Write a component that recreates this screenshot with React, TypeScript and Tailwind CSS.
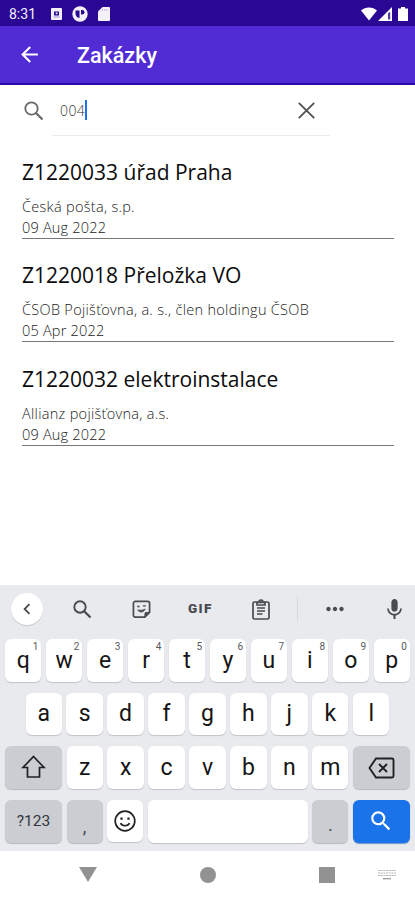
import type { ReactNode } from 'react';
import { MdArrowBack, MdChevronLeft, MdMic, MdMoreHoriz, MdSearch } from 'react-icons/md';

const ORDERS = [
  { name: 'Z1220033 úřad Praha', client: 'Česká pošta, s.p.', date: '09 Aug 2022' },
  { name: 'Z1220018 Přeložka VO', client: 'ČSOB Pojišťovna, a. s., člen holdingu ČSOB', date: '05 Apr 2022' },
  { name: 'Z1220032 elektroinstalace', client: 'Allianz pojišťovna, a.s.', date: '09 Aug 2022' },
];

const TOP_ROW = ['q', 'w', 'e', 'r', 't', 'y', 'u', 'i', 'o', 'p'];
const MIDDLE_ROW = ['a', 's', 'd', 'f', 'g', 'h', 'j', 'k', 'l'];
const BOTTOM_ROW = ['z', 'x', 'c', 'v', 'b', 'n', 'm'];

const StatusBar = () => {
  return (
    <div className="flex h-[26px] shrink-0 items-center bg-[#2a0894] pl-[9px] pr-[7px] pt-px text-[#f3f0fa]">
      <span className="w-[42px] pt-px text-[14px] leading-none">8:31</span>
      <svg width="11" height="12" viewBox="0 0 11 12">
        <rect width="11" height="12" rx="1" fill="currentColor" />
        <path d="M3 3.500h5v4H3z" fill="#2a0894" />
        <path d="M4.700 4.500h1.800v1.700H4.700z" fill="currentColor" />
        <path d="M2.500 9h6" stroke="#8a78c4" strokeWidth=".8" />
      </svg>
      <svg width="16" height="16" viewBox="0 0 16 16" className="ml-[10px]">
        <circle cx="8" cy="8" r="7.700" fill="currentColor" />
        <path d="M3.500 4.500h4V12C4.800 11.500 3.500 9.800 3.500 7.500z" fill="#2a0894" />
        <path d="M9 4h1.200a2.300 2.300 0 0 1 0 4.600H9z" fill="#2a0894" />
      </svg>
      <svg width="12" height="14" viewBox="0 0 12 14" className="ml-[10px]">
        <path d="M4.500 0H11a1 1 0 0 1 1 1v12a1 1 0 0 1-1 1H1a1 1 0 0 1-1-1V4.500z" fill="currentColor" />
        <path d="M4.500 2v2M6.700 2v2M8.900 2v2" stroke="#b9aee0" strokeWidth=".8" />
      </svg>
      <svg width="16" height="14" viewBox="0 0 16 14" className="ml-auto">
        <path d="M0 3.500C4.500-.5 11.500-.5 16 3.500L8 13.500z" fill="#fff" />
      </svg>
      <svg width="14" height="14" viewBox="0 0 14 14" className="ml-px">
        <path d="M0 14 14 0v14z" fill="#fff" />
        <path d="M10 6v6.500h2.200V5z" fill="#2a0894" opacity=".8" />
      </svg>
      <svg width="10" height="14" viewBox="0 0 10 14" className="ml-[6px]">
        <path d="M3 0h4v1.500h3V14H0V1.500h3z" fill="#fff" />
      </svg>
    </div>
  );
};

const AppBar = () => {
  return (
    <header className="flex h-[59px] shrink-0 items-center border-b-2 border-[#2a08b0] bg-[#512bd4] pl-[17px] text-white">
      <MdArrowBack size={25} />
      <h1 className="ml-[35px] pt-[3px] text-[21.500px] font-medium leading-none">Zakázky</h1>
    </header>
  );
};

const SearchField = () => {
  return (
    <div className="flex h-[51px] shrink-0 items-center pl-[24px]">
      <svg width="20" height="20" viewBox="0 0 20 20" fill="none" stroke="#686868">
        <circle cx="7.500" cy="7.500" r="6.200" strokeWidth="1.800" />
        <path d="m12 12 6.500 6.500" strokeWidth="2.200" />
      </svg>
      <div className="ml-[8px] flex h-full w-[278px] items-center border-b border-[#ebebeb] pl-[8px]">
        <span className="pt-px font-['Open_Sans'] text-[14px] font-light leading-none tracking-[0.400px] text-[#333]">
          004
        </span>
        <span className="h-5 w-[2px] bg-[#1a73e8]" />
        <svg width="17" height="17" viewBox="0 0 17 17" fill="none" stroke="#505050" strokeWidth="1.800" className="ml-auto mr-[15px]">
          <path d="m.8.8 15.400 15.400M16.200.8.800 16.200" />
        </svg>
      </div>
    </div>
  );
};

const OrderList = () => {
  return (
    <ul className="-mt-px flex flex-col pl-[22px] pr-[21px] font-['Open_Sans']">
      {ORDERS.map((order) => (
        <li key={order.name} className="flex h-[103.600px] flex-col justify-end border-b-[1.500px] border-[#777]">
          <p className="mb-[9px] text-[21px] leading-[30px] text-[#0c0c0c]">{order.name}</p>
          <p className="text-[14.500px] font-light leading-[21px] tracking-[0.300px] text-[#222]">{order.client}</p>
          <p className="text-[14.500px] font-light leading-[21px] tracking-[0.200px] text-[#222]">{order.date}</p>
        </li>
      ))}
    </ul>
  );
};

const Toolbar = () => {
  return (
    <div className="flex h-[48px] items-center pl-[11px] text-[#484b4f]">
      <span className="flex size-8 items-center justify-center rounded-full bg-white shadow-[0_1px_1px_#c4c7cb]">
        <MdChevronLeft size={22} />
      </span>
      <svg width="19" height="19" viewBox="0 0 19 19" fill="none" stroke="currentColor" className="ml-[30px]">
        <circle cx="7" cy="7" r="5.700" strokeWidth="1.900" />
        <path d="m11.200 11.200 6.300 6.300" strokeWidth="2.300" />
      </svg>
      <svg width="19" height="19" viewBox="0 0 20 20" fill="none" stroke="currentColor" strokeWidth="1.800" className="ml-[40px]">
        <path d="M3.500 1.500h13a2 2 0 0 1 2 2v9.500l-5 5h-10a2 2 0 0 1-2-2V3.500a2 2 0 0 1 2-2z" />
        <path d="M13.500 18v-3.500a1.500 1.500 0 0 1 1.500-1.500h3.500z" fill="currentColor" strokeWidth=".8" />
        <path d="M5.500 6.800h2.500M11.500 6.200h3" strokeWidth="1.500" />
        <path d="M6 10.500c2 3 6 3 8-1-2.500 1.300-5 1.500-8 1z" fill="currentColor" strokeWidth=".8" />
      </svg>
      <span className="ml-[37px] w-[27px] text-[13.500px] font-black leading-none tracking-[1.300px]">GIF</span>
      <svg width="18" height="21" viewBox="0 0 18 21" fill="none" stroke="currentColor" strokeWidth="1.700" className="ml-[37px]">
        <rect x="1" y="3" width="16" height="17" rx="1.500" />
        <path d="M5 3.500h8v2.500H5zM7.200 2.500a1.800 1.500 0 0 1 3.600 0" />
        <path d="M5 9h8M5 12h8M5 15h5.500" strokeWidth="1.300" />
      </svg>
      <span className="ml-[27px] h-[24px] w-px bg-[#d5d8dc]" />
      <MdMoreHoriz size={26} className="ml-[24px]" />
      <MdMic size={25} className="ml-[34px]" />
    </div>
  );
};

const Key = ({ children, hint }: { children?: ReactNode; hint?: number }) => {
  return (
    <div className="relative flex h-[42.500px] w-[36.400px] shrink-0 items-center justify-center rounded-[6px] bg-white text-[23px] leading-none text-[#151515] shadow-[0_1px_1px_#bfc2c6]">
      {children}
      {hint !== undefined && (
        <span className="absolute right-[3px] top-[3px] text-[10px] leading-none text-[#55585c]">{hint}</span>
      )}
    </div>
  );
};

const Keyboard = () => {
  return (
    <section className="mt-auto flex h-[266px] shrink-0 flex-col bg-[#e8eaed]">
      <Toolbar />
      <div className="mt-[6px] flex flex-col gap-[11px] px-[5px]">
        <div className="flex justify-between">
          {TOP_ROW.map((letter, index) => (
            <Key key={letter} hint={(index + 1) % 10}>{letter}</Key>
          ))}
        </div>

        <div className="flex justify-between px-[20.500px]">
          {MIDDLE_ROW.map((letter) => (
            <Key key={letter}>{letter}</Key>
          ))}
        </div>

        <div className="flex justify-between">
          <div className="flex w-[57px] items-center justify-center rounded-[6px] bg-[#cbcdd2] shadow-[0_1px_1px_#b5b8bc]">
            <svg width="25" height="24" viewBox="0 0 25 24" fill="none" stroke="#222" strokeWidth="1.700">
              <path d="M12.500 1.500 23 12.500h-4.500v9.500h-12v-9.500H2z" />
            </svg>
          </div>
          {BOTTOM_ROW.map((letter) => (
            <Key key={letter}>{letter}</Key>
          ))}
          <div className="flex w-[57px] items-center justify-center rounded-[6px] bg-[#cbcdd2] pt-px shadow-[0_1px_1px_#b5b8bc]">
            <svg width="27" height="22" viewBox="0 0 27 22" fill="none" stroke="#222" strokeWidth="1.900">
              <path d="M8 1.500h16a1.500 1.500 0 0 1 1.500 1.500v16a1.500 1.500 0 0 1-1.500 1.500H8L1.500 11z" />
              <path d="m11 7 8 8M19 7l-8 8" />
            </svg>
          </div>
        </div>

        <div className="flex h-[43.500px] justify-between">
          <div className="flex w-[57px] items-center justify-center rounded-[6px] bg-[#cbcdd2] pt-px text-[15.500px] text-[#33363a] shadow-[0_1px_1px_#b5b8bc]">
            ?123
          </div>
          <div className="flex w-[36px] items-end justify-center rounded-[6px] bg-[#cbcdd2] pb-[7px] text-[18px] leading-none text-[#44474b] shadow-[0_1px_1px_#b5b8bc]">
            ,
          </div>
          <Key>
            <svg width="22" height="22" viewBox="0 0 22 22" fill="none" stroke="#222" strokeWidth="1.700">
              <circle cx="11" cy="11" r="9.800" />
              <path d="M6.500 13.200c1.500 3.400 7.500 3.400 9 0" />
              <path d="M7.500 7.500v2.200M14.500 7.500v2.200" strokeWidth="2.200" />
            </svg>
          </Key>
          <div className="w-[160px] rounded-[6px] bg-white shadow-[0_1px_1px_#bfc2c6]" />
          <div className="flex w-[36px] items-end justify-center rounded-[6px] bg-[#cbcdd2] pb-[9px] text-[18px] leading-none text-[#44474b] shadow-[0_1px_1px_#b5b8bc]">
            .
          </div>
          <div className="flex w-[57px] items-center justify-center rounded-[6px] bg-[#1a73e8] text-white shadow-[0_1px_1px_#6f94c8]">
            <MdSearch size={26} />
          </div>
        </div>
      </div>
    </section>
  );
};

const NavigationBar = () => {
  return (
    <nav className="flex h-[49px] shrink-0 items-center bg-white pb-px pl-[79px] text-[#929292]">
      <svg width="18" height="15" viewBox="0 0 18 15" fill="currentColor" className="-mt-px">
        <path d="M0 0h18L9 15z" />
      </svg>
      <span className="ml-[103px] size-4 rounded-full bg-current" />
      <span className="ml-[103px] size-4 bg-current" />
      <svg width="18" height="10" viewBox="0 0 18 10" stroke="currentColor" className="ml-[43px]">
        <path d="M0 .500h18M0 3h18M0 5.500h18" strokeWidth="1" strokeDasharray="2 .700" opacity=".65" />
        <path d="M5 8.700h8" strokeWidth="1.200" />
      </svg>
    </nav>
  );
};

const App = () => {
  return (
    <main className="flex h-[900px] w-[415px] flex-col overflow-hidden bg-white font-[Roboto,sans-serif]">
      <StatusBar />
      <AppBar />
      <SearchField />
      <OrderList />
      <Keyboard />
      <NavigationBar />
    </main>
  );
};

export default App;
